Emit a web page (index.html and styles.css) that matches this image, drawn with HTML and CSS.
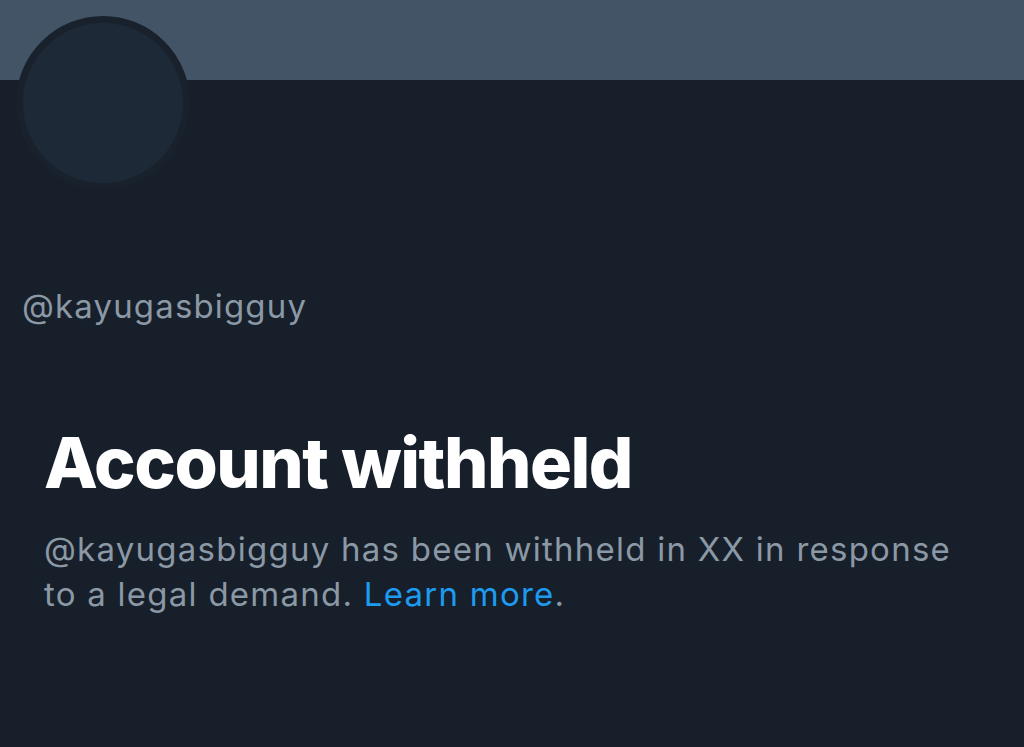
FILE: index.html
```html
<!DOCTYPE html>
<html lang="en">
<head>
<meta charset="utf-8">
<title>Account withheld</title>
<link rel="stylesheet" href="styles.css">
</head>
<body>
<div class="profile">
  <div class="banner"></div>
  <div class="avatar"></div>
  <div class="info">
    <div class="handle">@kayugasbigguy</div>
  </div>
  <div class="notice">
    <h1 class="title">Account withheld</h1>
    <p class="desc">@kayugasbigguy has been withheld in XX in response to a legal demand. <a class="link" href="#">Learn more</a>.</p>
  </div>
</div>
</body>
</html>
```
FILE: styles.css
```css
html, body {
  margin: 0;
  padding: 0;
  background: #171f2a;
  height: 100%;
  overflow: hidden;
}
.profile {
  position: relative;
  font-family: Inter, "Noto Sans", sans-serif;
}
.banner {
  height: 80px;
  background: #425466;
}
.avatar {
  position: absolute;
  left: 16px;
  top: 16px;
  width: 160px;
  height: 160px;
  border: 7px solid #18212c;
  border-radius: 50%;
  background: #1e2938;
}
.info {
  padding: 206px 22px 0;
}
.handle {
  color: #8b98a5;
  font-size: 33px;
  line-height: 40px;
  letter-spacing: 1.15px;
}
.notice {
  padding: 97px 44px 0;
}
.title {
  margin: 0;
  color: #ffffff;
  font-size: 70px;
  font-weight: 800;
  line-height: 80px;
  letter-spacing: -1.5px;
}
.desc {
  margin: 24px 0 0;
  color: #8b98a5;
  font-size: 33px;
  line-height: 45px;
  letter-spacing: 1.25px;
  max-width: 930px;
}
.link {
  color: #1d9bf0;
  text-decoration: none;
}
```
